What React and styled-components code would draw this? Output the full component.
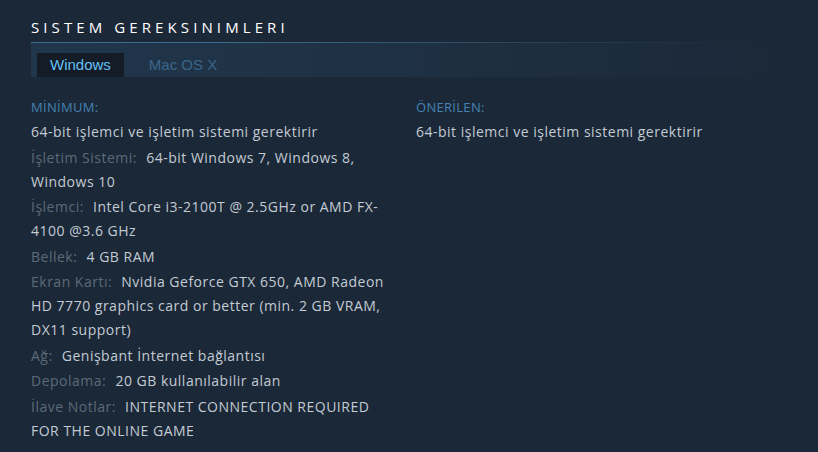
import React from "react";
import styled, { createGlobalStyle } from "styled-components";

const Global = createGlobalStyle`
  html, body { margin: 0; padding: 0; background: #1b2838; }
  body { font-family: "Open Sans", "Noto Sans", sans-serif; }
`;

const Page = styled.div`
  width: 818px;
  height: 452px;
  box-sizing: border-box;
  padding: 0 17px 0 31px;
  background: #1b2838;
  overflow: hidden;
`;

const Title = styled.h2`
  margin: 0;
  padding: 15px 0 3px;
  font-family: "Open Sans", sans-serif;
  font-weight: 400;
  font-size: 15px;
  line-height: 24px;
  letter-spacing: 4.1px;
  text-transform: uppercase;
  color: #ffffff;
  border-bottom: 1px solid transparent;
  border-image: linear-gradient(to right, #3b6e8c 0%, #3b6e8c 25%, rgba(59, 110, 140, 0) 92%) 1;
`;

const Tabs = styled.div`
  display: flex;
  padding: 10px 0 0 6px;
  background: linear-gradient(to right, rgba(38, 66, 92, 0.55) 0%, rgba(38, 66, 92, 0.25) 60%, rgba(38, 66, 92, 0) 100%);
`;

const Tab = styled.div`
  height: 24px;
  line-height: 24px;
  padding: 0 13px;
  margin-right: 12px;
  font-family: "Liberation Sans", Arial, sans-serif;
  font-size: 15px;
  color: ${(p) => (p.$active ? "#66c0f4" : "#3a6689")};
  background: ${(p) => (p.$active ? "#131c27" : "transparent")};
`;

const Columns = styled.div`
  display: grid;
  grid-template-columns: 48% 50%;
  justify-content: space-between;
  margin-top: 18px;
`;

const Col = styled.div``;

const Heading = styled.div`
  font-size: 13px;
  letter-spacing: 0.3px;
  line-height: 24px;
  margin-bottom: 1px;
  text-transform: uppercase;
  color: #4582b0;
`;

const List = styled.ul`
  list-style: none;
  margin: 0;
  padding: 0;
`;

const Item = styled.li`
  font-size: 14px;
  letter-spacing: 0.5px;
  line-height: 24px;
  margin-bottom: 1.5px;
  color: #c3cbd3;
`;

const Label = styled.span`
  color: #5d6a77;
  margin-right: 5px;
`;

const minimum = [
  { v: "64-bit işlemci ve işletim sistemi gerektirir" },
  { l: "İşletim Sistemi:", v: "64-bit Windows 7, Windows 8, Windows 10" },
  { l: "İşlemci:", v: "Intel Core i3-2100T @ 2.5GHz or AMD FX-4100 @3.6 GHz" },
  { l: "Bellek:", v: "4 GB RAM" },
  { l: "Ekran Kartı:", v: "Nvidia Geforce GTX 650, AMD Radeon HD 7770 graphics card or better (min. 2 GB VRAM, DX11 support)" },
  { l: "Ağ:", v: "Genişbant İnternet bağlantısı" },
  { l: "Depolama:", v: "20 GB kullanılabilir alan" },
  { l: "İlave Notlar:", v: "INTERNET CONNECTION REQUIRED FOR THE ONLINE GAME" },
];

const recommended = [{ v: "64-bit işlemci ve işletim sistemi gerektirir" }];

function Req({ items }) {
  return (
    <List>
      {items.map((it, i) => (
        <Item key={i}>
          {it.l && <Label>{it.l}</Label>} {it.v}
        </Item>
      ))}
    </List>
  );
}

export default function App() {
  return (
    <>
      <Global />
      <Page>
        <Title>Sistem Gereksinimleri</Title>
        <Tabs>
          <Tab $active>Windows</Tab>
          <Tab>Mac OS X</Tab>
        </Tabs>
        <Columns>
          <Col>
            <Heading>MİNİMUM:</Heading>
            <Req items={minimum} />
          </Col>
          <Col>
            <Heading>ÖNERİLEN:</Heading>
            <Req items={recommended} />
          </Col>
        </Columns>
      </Page>
    </>
  );
}
